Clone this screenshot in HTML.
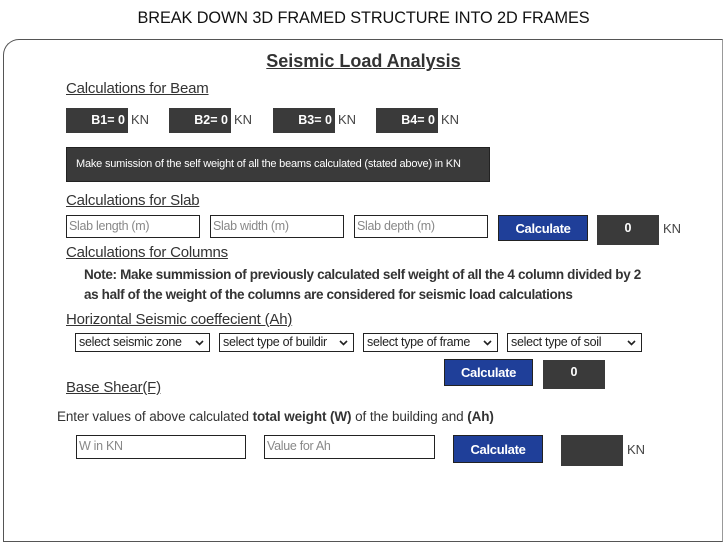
<!DOCTYPE html>
<html><head><style>
body{margin:0;width:727px;height:545px;background:#fff;font-family:"Liberation Sans",sans-serif;position:relative;overflow:hidden;color:#222}
.a{position:absolute}
.h{font-size:16.3px;left:0;width:727px;text-align:center;top:9px;color:#111;letter-spacing:-0.08px}
.frame{left:3px;top:39px;width:718px;height:501px;border:1.5px solid #555;border-top-left-radius:16px;border-right:1px solid #999}
.u{text-decoration:underline;font-size:15px;color:#333;letter-spacing:-0.2px}
.db{background:#3a3a3a;color:#fff;font-weight:bold;font-size:12.5px}
.kn{font-size:13px;color:#444}
.in{border:1px solid #222;font-size:12.5px;color:#888;box-sizing:border-box;padding:2px 2px;line-height:17px;letter-spacing:-0.3px}
.btn{background:#1f3f99;border:1px solid #222;color:#fff;font-weight:bold;font-size:13px;text-align:center;box-sizing:border-box;letter-spacing:-0.3px}
.sel{border:1px solid #222;font-size:12.5px;color:#222;box-sizing:border-box;padding:0 3px;line-height:17px;height:19px;letter-spacing:-0.3px}
.sel svg{position:absolute;right:5px;top:6px}
</style></head><body>
<div class="a h">BREAK DOWN 3D FRAMED STRUCTURE INTO 2D FRAMES</div>
<div class="a frame"></div>
<div class="a" style="left:0;width:727px;text-align:center;top:51px;font-size:18px;font-weight:bold;text-decoration:underline;color:#333">Seismic Load Analysis</div>
<div class="a u" style="left:66px;top:80px">Calculations for Beam</div>
<div class="a db" style="left:66px;top:108px;width:62px;height:25px;line-height:25px;text-align:right"><span style="padding-right:3px">B1= 0</span></div><div class="a kn" style="left:131px;top:112px">KN</div>
<div class="a db" style="left:169px;top:108px;width:62px;height:25px;line-height:25px;text-align:right"><span style="padding-right:3px">B2= 0</span></div><div class="a kn" style="left:234px;top:112px">KN</div>
<div class="a db" style="left:273px;top:108px;width:62px;height:25px;line-height:25px;text-align:right"><span style="padding-right:3px">B3= 0</span></div><div class="a kn" style="left:338px;top:112px">KN</div>
<div class="a db" style="left:376px;top:108px;width:62px;height:25px;line-height:25px;text-align:right"><span style="padding-right:3px">B4= 0</span></div><div class="a kn" style="left:441px;top:112px">KN</div>
<div class="a" style="left:66px;top:147px;width:424px;height:35px;background:#3a3a3a;border:1px solid #222;box-sizing:border-box;color:#fff;font-size:11px;line-height:33px;padding-left:9px;letter-spacing:-0.2px">Make sumission of the self weight of all the beams calculated (stated above) in KN</div>
<div class="a u" style="left:66px;top:192px">Calculations for Slab</div>
<div class="a in" style="left:66px;top:215px;width:134px;height:23px">Slab length (m)</div>
<div class="a in" style="left:210px;top:215px;width:134px;height:23px">Slab width (m)</div>
<div class="a in" style="left:354px;top:215px;width:134px;height:23px">Slab depth (m)</div>
<div class="a btn" style="left:498px;top:215px;width:90px;height:26px;line-height:25px">Calculate</div>
<div class="a db" style="left:597px;top:215px;width:62px;height:30px;line-height:26px;text-align:center">0</div><div class="a kn" style="left:663px;top:221px">KN</div>
<div class="a u" style="left:66px;top:244px">Calculations for Columns</div>
<div class="a" style="left:84px;top:265px;font-size:13.5px;font-weight:bold;color:#333;line-height:19.5px;letter-spacing:-0.36px">Note: Make summission of previously calculated self weight of all the 4 column divided by 2<br>as half of the weight of the columns are considered for seismic load calculations</div>
<div class="a u" style="left:66px;top:311px">Horizontal Seismic coeffecient (Ah)</div>
<div class="a sel" style="left:75px;top:333px;width:135px">select seismic zone<svg width="9" height="6"><path d="M1 1L4.5 4.5L8 1" stroke="#222" stroke-width="1.6" fill="none"/></svg></div>
<div class="a sel" style="left:219px;top:333px;width:135px">select type of buildir<svg width="9" height="6"><path d="M1 1L4.5 4.5L8 1" stroke="#222" stroke-width="1.6" fill="none"/></svg></div>
<div class="a sel" style="left:363px;top:333px;width:135px">select type of frame<svg width="9" height="6"><path d="M1 1L4.5 4.5L8 1" stroke="#222" stroke-width="1.6" fill="none"/></svg></div>
<div class="a sel" style="left:507px;top:333px;width:135px">select type of soil<svg width="9" height="6"><path d="M1 1L4.5 4.5L8 1" stroke="#222" stroke-width="1.6" fill="none"/></svg></div>
<div class="a btn" style="left:444px;top:359px;width:89px;height:27px;line-height:26px">Calculate</div>
<div class="a db" style="left:543px;top:360px;width:62px;height:29px;line-height:24px;text-align:center">0</div>
<div class="a u" style="left:66px;top:379px">Base Shear(F)</div>
<div class="a" style="left:57px;top:409px;font-size:13.5px;color:#333;letter-spacing:-0.1px">Enter values of above calculated <b>total weight (W)</b> of the building and <b>(Ah)</b></div>
<div class="a in" style="left:76px;top:435px;width:170px;height:24px">W in KN</div>
<div class="a in" style="left:264px;top:435px;width:171px;height:24px">Value for Ah</div>
<div class="a btn" style="left:453px;top:435px;width:90px;height:28px;line-height:27px">Calculate</div>
<div class="a db" style="left:561px;top:435px;width:62px;height:31px"></div><div class="a kn" style="left:627px;top:442px">KN</div>
</body></html>
